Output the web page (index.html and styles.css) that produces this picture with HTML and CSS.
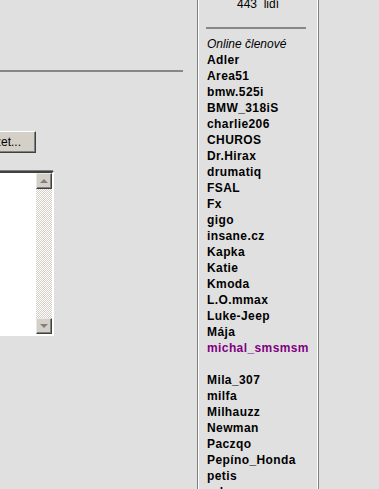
FILE: index.html
```html
<!DOCTYPE html>
<html lang="cs">
<head>
    <meta charset="UTF-8">
    <title>Online členové</title>
    <link rel="stylesheet" href="styles.css">
</head>
<body>
    <div class="page">
        <div class="main">
            <div class="rule"></div>
            <div class="upload">
                <button class="btn">Procházet...</button>
            </div>
            <div class="editor">
                <div class="memo">
                    <div class="memo-text"></div>
                    <div class="scrollbar">
                        <div class="sb-btn"><span class="arrow-up"></span></div>
                        <div class="sb-track"></div>
                        <div class="sb-btn"><span class="arrow-down"></span></div>
                    </div>
                </div>
            </div>
        </div>

        <div class="sidebar">
            <div class="count">443&nbsp;&nbsp;lidí</div>
            <div class="sep"></div>
            <div class="online-title">Online členové</div>
            <ul class="members">
                <li>Adler</li>
                <li>Area51</li>
                <li>bmw.525i</li>
                <li>BMW_318iS</li>
                <li>charlie206</li>
                <li>CHUROS</li>
                <li>Dr.Hirax</li>
                <li>drumatiq</li>
                <li>FSAL</li>
                <li>Fx</li>
                <li>gigo</li>
                <li>insane.cz</li>
                <li>Kapka</li>
                <li>Katie</li>
                <li>Kmoda</li>
                <li>L.O.mmax</li>
                <li>Luke-Jeep</li>
                <li>Mája</li>
                <li class="visited">michal_smsmsm</li>
                <li>&nbsp;</li>
                <li>Mila_307</li>
                <li>milfa</li>
                <li>Milhauzz</li>
                <li>Newman</li>
                <li>Paczqo</li>
                <li>Pepíno_Honda</li>
                <li>petis</li>
                <li>ruben</li>
            </ul>
        </div>
    </div>
</body>
</html>
```

FILE: styles.css
```css
body {
    margin: 0;
    background-color: #e0e0e0;
    font-family: "Liberation Sans", Arial, sans-serif;
    font-size: 12px;
    overflow: hidden;
    height: 489px;
}
.page {
    display: flex;
    align-items: flex-start;
}
.main {
    flex: none;
    width: 183px;
    padding-top: 70px;
}
.rule {
    height: 2px;
    background-color: #878787;
}
.upload {
    width: 36px;
    display: flex;
    justify-content: flex-end;
    margin-top: 59px;
}
.btn {
    flex: none;
    height: 22px;
    padding: 0 14px 0 10px;
    background-color: #d4d0c8;
    border: 1px solid;
    border-color: #ffffff #404040 #404040 #ffffff;
    box-shadow: inset -1px -1px #808080;
    font-family: "Liberation Sans", Arial, sans-serif;
    font-size: 12px;
    color: #000;
    white-space: nowrap;
}
.editor {
    width: 54px;
    display: flex;
    justify-content: flex-end;
    margin-top: 18px;
}
.memo {
    flex: none;
    width: 200px;
    height: 161px;
    display: flex;
    background-color: #ffffff;
    border: 2px solid;
    border-color: #404040 #ffffff #ffffff #404040;
    box-shadow: -1px -1px #808080;
}
.memo-text {
    flex: 1;
}
.scrollbar {
    width: 16px;
    display: flex;
    flex-direction: column;
}
.sb-btn {
    height: 14px;
    background-color: #d4d0c8;
    border: 1px solid;
    border-color: #e8e8e8 #404040 #404040 #e8e8e8;
    box-shadow: inset -1px -1px #808080;
    display: flex;
    align-items: center;
    justify-content: center;
}
.sb-track {
    flex: 1;
    background-image: repeating-conic-gradient(#ffffff 0 25%, #d4d0c8 0 50%);
    background-size: 2px 2px;
}
.arrow-up {
    width: 0;
    height: 0;
    border-left: 4px solid transparent;
    border-right: 4px solid transparent;
    border-bottom: 4px solid #808080;
}
.arrow-down {
    width: 0;
    height: 0;
    border-left: 4px solid transparent;
    border-right: 4px solid transparent;
    border-top: 4px solid #808080;
}
.sidebar {
    flex: none;
    width: 120px;
    margin-left: 14px;
    margin-top: -4px;
    min-height: 500px;
    border-left: 1px solid #808080;
    border-right: 1px solid #808080;
    box-shadow: inset 1px 0 #ffffff, inset -1px 0 #ffffff;
    line-height: 16px;
}
.count {
    text-align: center;
    color: #000;
}
.sep {
    height: 2px;
    width: 100px;
    margin: 15px 0 7px 8px;
    background-color: #878787;
}
.online-title {
    padding-left: 9px;
    font-style: italic;
}
.members {
    list-style: none;
    margin: 0;
    padding: 0 0 0 9px;
    font-weight: bold;
    letter-spacing: 0.4px;
}
.visited {
    color: #800080;
}
```
